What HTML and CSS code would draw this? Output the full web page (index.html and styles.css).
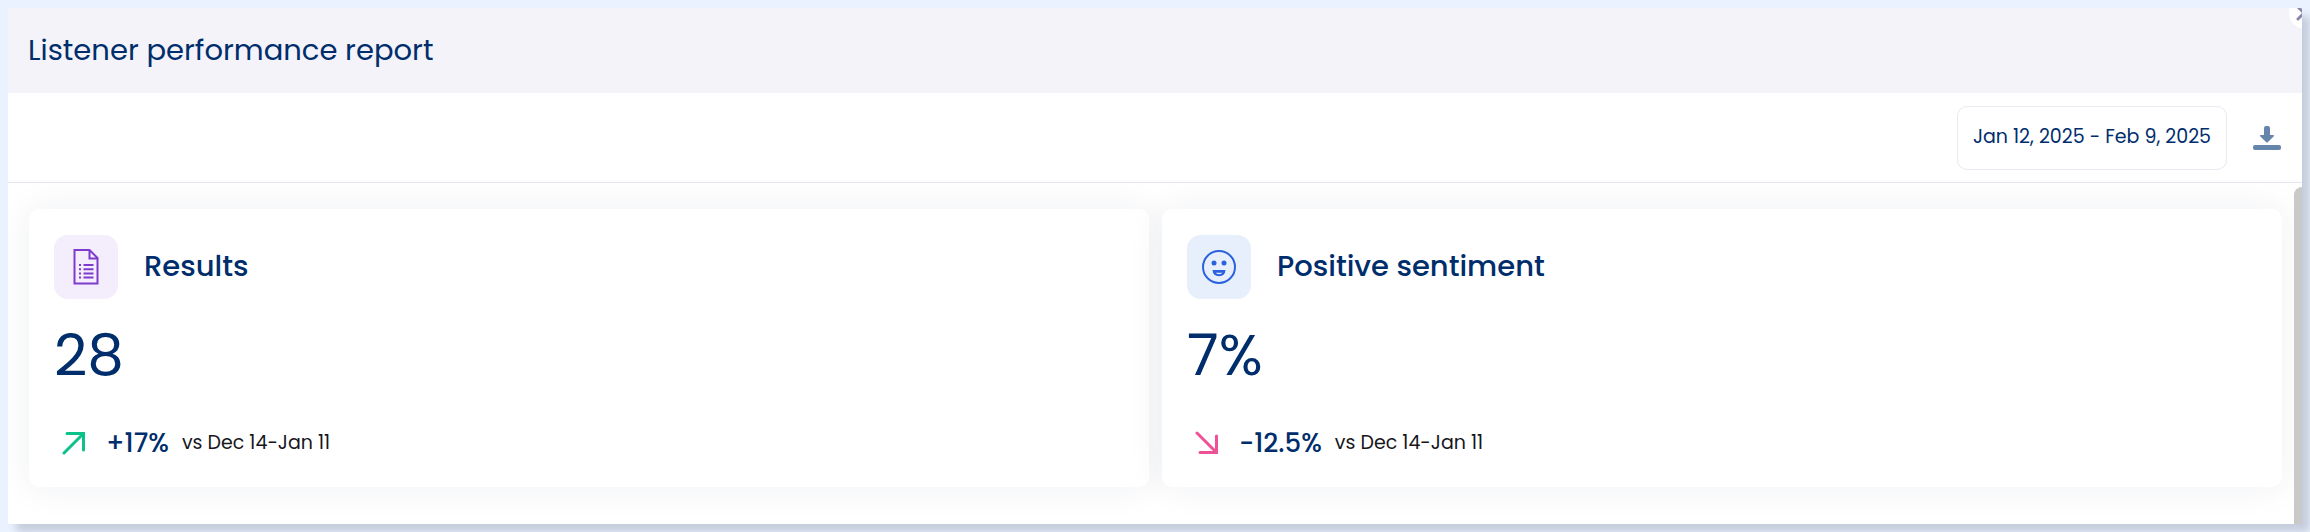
FILE: index.html
```html
<!DOCTYPE html>
<html lang="en">
<head>
  <meta charset="UTF-8">
  <meta name="viewport" content="width=device-width, initial-scale=1.0">
  <title>Listener performance report</title>
  <link rel="stylesheet" href="styles.css">
</head>
<body>
  <main class="panel">
    <header class="panel-header">
      <h1>Listener performance report</h1>
      <button class="close" type="button" aria-label="Close">
        <svg width="32" height="32" viewBox="0 0 32 32">
          <path d="M9 10l12 12M21 10L9 22" />
        </svg>
      </button>
    </header>

    <div class="toolbar">
      <button class="date-range" type="button">Jan 12, 2025 - Feb 9, 2025</button>
      <button class="download" type="button" aria-label="Download">
        <svg width="28" height="24" viewBox="0 0 28 24">
          <path d="M11 2q0-2 2-2h2q2 0 2 2v7h3q2 0 .6 1.500L15 16q-1 1-2 0L7.400 10.500Q6 9 8 9h3z" />
          <rect y="19" width="28" height="5" rx="2" />
        </svg>
      </button>
    </div>

    <div class="content">
      <div class="cards">
        <section class="card">
          <div class="card-title">
            <span class="icon icon-results">
              <svg width="26" height="36" viewBox="0 0 26 36">
                <path d="M1.500 1h15L24.500 9v25.500h-23z" />
                <path d="M16.500 1v8.500h8" />
                <path d="M10.500 16h10M10.500 20.200h10M10.500 24.400h10M10.500 28.600h10M6 16h2M6 20.200h2M6 24.400h2M6 28.600h2" />
              </svg>
            </span>
            <h2>Results</h2>
          </div>
          <div class="value">28</div>
          <div class="trend">
            <svg class="arrow up" width="24" height="24" viewBox="0 0 24 24">
              <path d="M2 22L21 3M5 2.500h16.500V19" />
            </svg>
            <span class="change">+17%</span>
            <span class="period">vs Dec 14-Jan 11</span>
          </div>
        </section>

        <section class="card">
          <div class="card-title">
            <span class="icon icon-sentiment">
              <svg width="34" height="34" viewBox="0 0 34 34">
                <circle cx="17" cy="17" r="16" />
                <circle class="solid" cx="12" cy="13" r="2.500" />
                <circle class="solid" cx="22" cy="13" r="2.500" />
                <path class="solid" d="M10.500 20h13q-.5 6.200-6.500 6.200T10.500 20zM13.600 22.800q1 1.400 3.400 1.400t3.400-1.400z" fill-rule="evenodd" />
              </svg>
            </span>
            <h2>Positive sentiment</h2>
          </div>
          <div class="value">7%</div>
          <div class="trend">
            <svg class="arrow down" width="24" height="24" viewBox="0 0 24 24">
              <path d="M2 2l19 19M5 21.500h16.500V5" />
            </svg>
            <span class="change">-12.5%</span>
            <span class="period">vs Dec 14-Jan 11</span>
          </div>
        </section>
      </div>
      <div class="scroll-thumb"></div>
    </div>
  </main>
</body>
</html>
```
FILE: styles.css
```css
* {
  box-sizing: border-box;
}
body {
  margin: 0;
  padding: 8px;
  background: #eaf2ff;
  color: #002d6b;
  font-family: Poppins, Inter, sans-serif;
}
h1, h2 {
  margin: 0;
}
button {
  border: none;
  background: none;
  padding: 0;
  font: inherit;
  color: inherit;
  cursor: pointer;
}
svg {
  display: block;
  fill: none;
}
.panel {
  background: #fff;
  box-shadow: 8px 8px 8px #c5cddc;
}
.panel-header {
  position: relative;
  overflow: hidden;
  padding: 20px 20px 21px;
  background: #f4f3f9;
}
h1 {
  font-size: 29px;
  line-height: 44px;
  font-weight: 400;
}
.close {
  position: absolute;
  top: -11px;
  right: -19px;
  border-radius: 50%;
  background: #fff;
}
.close svg {
  stroke: #8988ab;
  stroke-width: 3;
  stroke-linecap: round;
}
.toolbar {
  display: flex;
  justify-content: flex-end;
  align-items: center;
  gap: 26px;
  padding: 13px 21px 12px;
  border-bottom: 1px solid #e7e6f0;
}
.date-range {
  height: 64px;
  padding: 0 15px 4px;
  border: 1px solid #e9e8f1;
  border-radius: 10px;
  font-size: 19px;
}
.download svg {
  fill: #6685aa;
}
.content {
  display: flex;
  overflow: hidden;
}
.cards {
  flex: 1;
  display: grid;
  grid-template-columns: 1fr 1fr;
  gap: 13px;
  padding: 26px 12px 37px 21px;
}
.card {
  padding: 26px 25px 24px;
  border-radius: 10px;
  background: #fff;
  box-shadow: 0 0 36px rgba(0, 45, 85, 0.07);
}
.card-title {
  display: flex;
  align-items: center;
  gap: 26px;
}
.icon {
  display: flex;
  align-items: center;
  justify-content: center;
  width: 64px;
  height: 64px;
  border-radius: 14px;
}
.icon-results {
  background: #f4edfc;
  stroke: #7f3bcb;
  stroke-width: 2;
}
.icon-sentiment {
  background: #e8effc;
  stroke: #2b62de;
  stroke-width: 2;
}
.solid {
  fill: #2b62de;
  stroke: none;
}
h2 {
  padding-bottom: 2px;
  font-size: 29px;
  line-height: 44px;
  font-weight: 500;
}
.value {
  margin-top: 20px;
  font-size: 58px;
  line-height: 72px;
}
.trend {
  display: flex;
  align-items: center;
  margin-top: 32px;
  line-height: 40px;
}
.arrow {
  margin: 0 20px 0 8px;
  stroke-width: 3;
  stroke-linecap: round;
}
.up {
  stroke: #0cc18a;
}
.down {
  stroke: #ef5196;
}
.change {
  margin-right: 13px;
  font-size: 26px;
  font-weight: 500;
}
.period {
  color: #16161d;
  font-size: 19px;
}
.scroll-thumb {
  width: 8px;
  margin-top: 4px;
  border-radius: 8px 0 0 0;
  background: #c9c9c9;
}
```
